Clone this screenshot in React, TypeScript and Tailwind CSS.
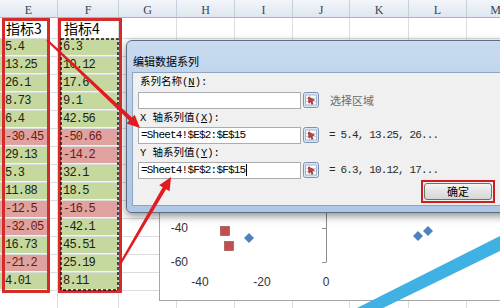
import React from 'react';

const cols = [
  { l: 'E', w: 'w-[58px]' },
  { l: 'F', w: 'w-[61px]' },
  { l: 'G', w: 'w-[58px]' },
  { l: 'H', w: 'w-[58px]' },
  { l: 'I', w: 'w-[58px]' },
  { l: 'J', w: 'w-[57px]' },
  { l: 'K', w: 'w-[59px]' },
  { l: 'L', w: 'w-[58px]' },
  { l: 'M', w: 'w-[58px]' },
];

const colE = ['5.4', '13.25', '26.1', '8.73', '6.4', '-30.45', '29.13', '5.3', '11.88', '-12.5', '-32.05', '16.73', '-21.2', '4.01'];
const colF = ['6.3', '10.12', '17.6', '9.1', '42.56', '-50.66', '-14.2', '32.1', '18.5', '-16.5', '-42.1', '45.51', '25.19', '8.11'];
const redE = [5, 9, 10, 12];
const redF = [5, 6, 9];

const mono = "font-['Liberation_Mono','DejaVu_Sans_Mono',monospace]";
const cjk = "font-['Liberation_Mono','Noto_Sans_CJK_SC',monospace]";

function RangeIcon() {
  return (
    <svg width="16" height="16" viewBox="0 0 16 16">
      <rect x="0.5" y="0.5" width="15" height="15" rx="2" fill="#dce7f3" stroke="#7b92b3" />
      <rect x="2.5" y="3" width="11" height="10" fill="#fff" stroke="#8fa7c6" strokeWidth="0.8" />
      <line x1="2.5" y1="6.3" x2="13.5" y2="6.3" stroke="#a9bfdc" strokeWidth="0.8" />
      <line x1="2.5" y1="9.6" x2="13.5" y2="9.6" stroke="#a9bfdc" strokeWidth="0.8" />
      <line x1="6.5" y1="3" x2="6.5" y2="13" stroke="#a9bfdc" strokeWidth="0.8" />
      <path d="M5.5 5 L11.5 8 L8.8 8.9 L10 11.8 L8.7 12.3 L7.6 9.5 L5.8 11 Z" fill="#e03b2c" stroke="#7b1a12" strokeWidth="0.6" />
    </svg>
  );
}

function GridRow({ h, e, f, eRed, fRed, head }: { h: string; e?: string; f?: string; eRed?: boolean; fRed?: boolean; head?: boolean }) {
  const fillE = e === undefined ? '' : eRed ? 'bg-[#e0a29e] text-[#6d1a12]' : 'bg-[#c5d89d] text-[#1e2312]';
  const fillF = f === undefined ? '' : fRed ? 'bg-[#e0a29e] text-[#6d1a12]' : 'bg-[#c5d89d] text-[#1e2312]';
  return (
    <div className={`flex ${h}`}>
      {cols.map((c, i) => (
        <div key={c.l} className={`${c.w} shrink-0 border-r border-b border-[#dadcdd]`}>
          {head && i === 0 && (
            <div className="pl-[6px] pt-[1px] text-[14px] leading-[19px] text-black font-['Noto_Sans_CJK_SC',sans-serif]">指标3</div>
          )}
          {head && i === 1 && (
            <div className="pl-[6px] pt-[1px] text-[14px] leading-[19px] text-black font-['Noto_Sans_CJK_SC',sans-serif]">指标4</div>
          )}
          {!head && i === 0 && e !== undefined && (
            <div className={`w-[48px] h-full border-b border-[#f3f3f3] pl-[5px] text-[12px] leading-[17px] tracking-[-0.8px] ${mono} ${fillE}`}>{e}</div>
          )}
          {!head && i === 1 && f !== undefined && (
            <div className={`w-full h-full border-b border-[#f3f3f3] pl-[5px] text-[12px] leading-[17px] tracking-[-0.8px] ${mono} ${fillF}`}>{f}</div>
          )}
        </div>
      ))}
    </div>
  );
}

export default function App() {
  return (
    <div className="relative w-[500px] h-[308px] overflow-hidden bg-white">
      {/* column headers */}
      <div className="flex h-[18px] bg-[linear-gradient(to_bottom,#f3f6fa,#dfe6ef)] border-b border-[#9eb6ce]">
        {cols.map((c) => (
          <div key={c.l} className={`${c.w} shrink-0 border-r border-[#c3cfdd] text-center pt-[2px] text-[12px] leading-[16px] text-[#34465a] font-['Liberation_Serif',serif]`}>
            {c.l}
          </div>
        ))}
      </div>

      <GridRow h="h-[21px]" head />
      {colE.map((v, i) => (
        <GridRow key={i} h="h-[18px]" e={v} f={colF[i]} eRed={redE.includes(i)} fRed={redF.includes(i)} />
      ))}
      <GridRow h="h-[18px]" />
      <GridRow h="h-[18px]" />

      {/* chart, partly behind the dialog */}
      <div className="absolute left-[159px] top-[196px] w-[345px] h-[105px] bg-white border border-[#a6a6a6] z-10">
        <svg width="345" height="105" className="font-['Liberation_Sans',Arial,sans-serif]">
          <text x="28" y="35" textAnchor="end" fontSize="12" fill="#333">-40</text>
          <text x="28" y="69" textAnchor="end" fontSize="12" fill="#333">-60</text>
          <text x="40" y="89" textAnchor="middle" fontSize="12" fill="#333">-40</text>
          <text x="102" y="89" textAnchor="middle" fontSize="12" fill="#333">-20</text>
          <text x="166" y="89" textAnchor="middle" fontSize="12" fill="#333">0</text>
          <line x1="166.5" y1="16" x2="166.5" y2="65" stroke="#8c8c8c" />
          <line x1="162" y1="31.5" x2="166.5" y2="31.5" stroke="#8c8c8c" />
          <line x1="162" y1="65.5" x2="166.5" y2="65.5" stroke="#8c8c8c" />
          <rect x="60.5" y="29.5" width="9" height="9" fill="#c0504d" stroke="#9b3d3a" strokeWidth="0.6" />
          <rect x="64.5" y="44.5" width="9" height="9" fill="#c0504d" stroke="#9b3d3a" strokeWidth="0.6" />
          <path d="M89 36 L94 41 L89 46 L84 41 Z" fill="#4f81bd" />
          <path d="M258 34 L263 39 L258 44 L253 39 Z" fill="#4f81bd" />
          <path d="M268 29 L273 34 L268 39 L263 34 Z" fill="#4f81bd" />
        </svg>
      </div>

      {/* dialog */}
      <div className="absolute left-[126px] top-[40px] w-[390px] h-[173px] z-20 rounded-tl-[6px] rounded-bl-[5px] border border-[#5d6e84] bg-[linear-gradient(to_bottom,#c8dbf0,#b6cde8_45%,#aec7e5)] shadow-[0_3px_8px_rgba(0,0,0,0.45)]">
        <div className="h-[31px] flex items-end pb-[4px] pl-[6px] text-[11px] leading-[14px] text-black font-['Noto_Sans_CJK_SC',sans-serif]">
          编辑数据系列
        </div>
        <div className="ml-[5px] h-[134px] border border-[#8ea4c0] bg-[#f0f0f0] pt-[2px] text-[10.5px]">
          <div className={`pl-[7px] h-[14px] leading-[14px] text-black ${cjk}`}>
            系列名称(<span className="underline">N</span>):
          </div>
          <div className="mt-[3px] flex items-center h-[16px]">
            <div className="ml-[5px] w-[163px] h-[17px] bg-white border border-[#abadb3]" />
            <div className="ml-[2px]"><RangeIcon /></div>
            <div className="ml-[11px] text-[11px] text-[#6a6a6a] font-['Noto_Sans_CJK_SC',sans-serif]">选择区域</div>
          </div>
          <div className={`mt-[3px] pl-[7px] h-[14px] leading-[14px] text-black ${cjk}`}>
            X 轴系列值(<span className="underline">X</span>):
          </div>
          <div className="mt-[2px] flex items-center h-[16px]">
            <div className={`ml-[5px] w-[163px] h-[17px] bg-white border border-[#abadb3] pl-[2px] text-[11px] leading-[15px] tracking-[-0.8px] text-black ${mono}`}>
              =Sheet4!$E$2:$E$15
            </div>
            <div className="ml-[2px]"><RangeIcon /></div>
            <div className={`ml-[10px] text-[11px] tracking-[-0.85px] text-[#2a2a2a] ${mono}`}>= 5.4, 13.25, 26...</div>
          </div>
          <div className={`mt-[3px] pl-[7px] h-[14px] leading-[14px] text-black ${cjk}`}>
            Y 轴系列值(<span className="underline">Y</span>):
          </div>
          <div className="mt-[2px] flex items-center h-[16px]">
            <div className={`ml-[5px] w-[163px] h-[17px] bg-white border border-[#abadb3] pl-[2px] flex items-center text-[11px] leading-[15px] tracking-[-0.8px] text-black ${mono}`}>
              <span>=Sheet4!$F$2:$F$15</span>
              <span className="ml-[1px] w-[1px] h-[12px] bg-black" />
            </div>
            <div className="ml-[2px]"><RangeIcon /></div>
            <div className={`ml-[10px] text-[11px] tracking-[-0.85px] text-[#2a2a2a] ${mono}`}>= 6.3, 10.12, 17...</div>
          </div>
          <div className="mt-[2px] ml-[288px] w-[74px] h-[23px] border-2 border-[#cc2020] p-[1px]">
            <div className="w-full h-full rounded-[3px] border border-[#707070] bg-[linear-gradient(to_bottom,#f6f6f6,#e3e3e3_50%,#d6d6d6)] flex items-center justify-center text-[11px] text-black font-['Noto_Sans_CJK_SC',sans-serif]">
              确定
            </div>
          </div>
        </div>
      </div>

      {/* annotations: frames, arrows, watermark */}
      <svg className="absolute inset-0 z-30 pointer-events-none" width="500" height="308">
        <rect x="3.5" y="19.5" width="45" height="272" fill="none" stroke="#d42b2b" strokeWidth="3" />
        <rect x="59.5" y="19.5" width="61" height="272" fill="none" stroke="#d42b2b" strokeWidth="3" />
        <rect x="61" y="39" width="57" height="251" fill="none" stroke="#1a1a1a" strokeWidth="1.5" strokeDasharray="3 2" />
        <polygon points="47.7,39.3 132,117.6 134.7,114.7 140,128 126.5,123.5 129.2,120.6 46.3,40.7" fill="#e11b1f" />
        <polygon points="118.1,265.5 162.7,187.2 159.2,185.2 171,177 169.6,191.2 166.1,189.2 119.9,266.5" fill="#e11b1f" />
        <polygon points="357,308 500,236 500,251 383,308" fill="#3fb1e2" />
      </svg>
    </div>
  );
}
